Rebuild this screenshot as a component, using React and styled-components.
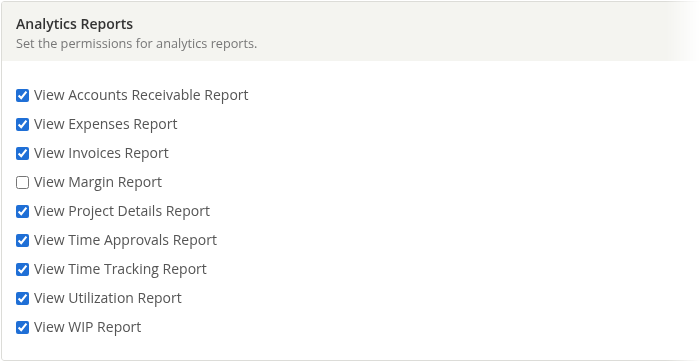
import React, { useState } from "react";
import styled, { createGlobalStyle } from "styled-components";

const GlobalStyle = createGlobalStyle`
  html, body {
    margin: 0;
    padding: 0;
    background: #fff;
  }
  body {
    font-family: "Open Sans", "Liberation Sans", sans-serif;
  }
`;

const reports = [
  { label: "View Accounts Receivable Report", checked: true },
  { label: "View Expenses Report", checked: true },
  { label: "View Invoices Report", checked: true },
  { label: "View Margin Report", checked: false },
  { label: "View Project Details Report", checked: true },
  { label: "View Time Approvals Report", checked: true },
  { label: "View Time Tracking Report", checked: true },
  { label: "View Utilization Report", checked: true },
  { label: "View WIP Report", checked: true },
];

const Page = () => {
  const [items, setItems] = useState(reports);

  const toggle = (i) => {
    setItems(items.map((it, idx) => (idx === i ? { ...it, checked: !it.checked } : it)));
  };

  return (
    <>
      <GlobalStyle />
      <Wrap>
        <Card>
          <Header>
            <Title>Analytics Reports</Title>
            <Subtitle>Set the permissions for analytics reports.</Subtitle>
          </Header>
          <Body>
            {items.map((it, i) => (
              <Row key={it.label}>
                <Check type="checkbox" checked={it.checked} onChange={() => toggle(i)} />
                <Label>{it.label}</Label>
              </Row>
            ))}
          </Body>
        </Card>
      </Wrap>
    </>
  );
};

export default Page;

const Wrap = styled.div`
  padding: 1px 0 0 1px;
  width: 700px;
  height: 362px;
  box-sizing: border-box;
`;

const Card = styled.div`
  width: 720px;
  height: 360px;
  box-sizing: border-box;
  border: 1px solid #dcdcd8;
  border-radius: 3px;
  background: #fff;
  overflow: hidden;
  -webkit-mask-image: linear-gradient(to right, #000 665px, transparent 700px);
  mask-image: linear-gradient(to right, #000 665px, transparent 700px);
`;

const Header = styled.div`
  background: #f4f4f0;
  height: 59px;
  box-sizing: border-box;
  padding: 12px 14px 0;
`;

const Title = styled.div`
  font-size: 14px;
  font-weight: 600;
  color: #333;
  line-height: 20px;
`;

const Subtitle = styled.div`
  font-size: 12.7px;
  color: #777;
  line-height: 18px;
`;

const Body = styled.div`
  display: flex;
  flex-direction: column;
  gap: 9px;
  padding: 24px 14px 0;
`;

const Row = styled.label`
  display: flex;
  align-items: center;
  height: 20px;
  cursor: pointer;
`;

const Check = styled.input`
  width: 13px;
  height: 13px;
  margin: 0 5px 0 0;
  accent-color: #1f6fd6;
`;

const Label = styled.span`
  font-size: 14px;
  color: #555;
  line-height: 20px;
`;
